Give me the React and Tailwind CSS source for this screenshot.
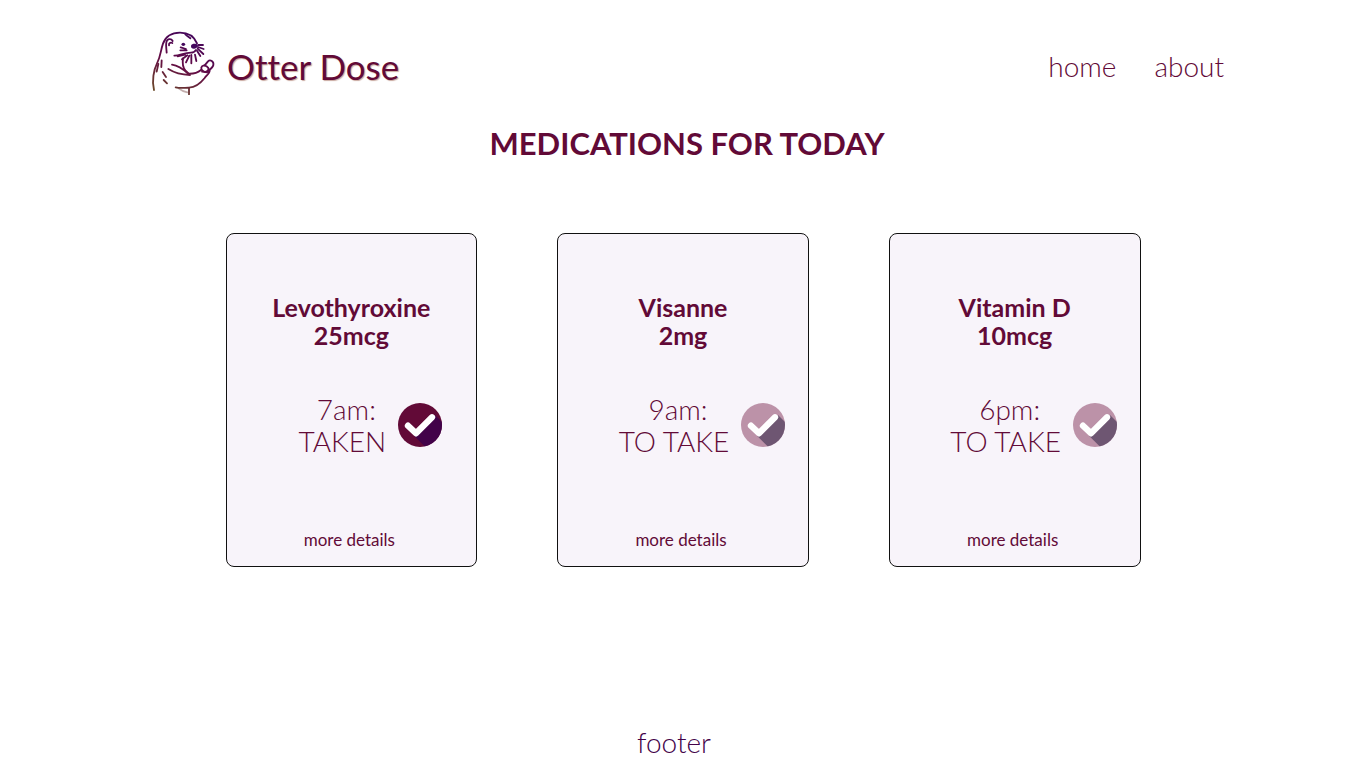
import { useId } from 'react';

const medications = [
  { name: 'Levothyroxine', dose: '25mcg', time: '7am:', taken: true },
  { name: 'Visanne', dose: '2mg', time: '9am:', taken: false },
  { name: 'Vitamin D', dose: '10mcg', time: '6pm:', taken: false },
];

function OtterLogo() {
  return (
    <svg className="h-16 w-16 shrink-0" viewBox="34 33 192 192" fill="none" aria-hidden="true">
      <defs>
        <linearGradient id="otter" gradientUnits="userSpaceOnUse" x1="150" y1="35" x2="70" y2="225">
          <stop offset="0" stopColor="#43075c" />
          <stop offset="0.5" stopColor="#640b45" />
          <stop offset="1" stopColor="#6b4a28" />
        </linearGradient>
      </defs>
      <g stroke="url(#otter)" strokeWidth="5.5" strokeLinecap="round" strokeLinejoin="round">
        <path d="M43 210C36 183 42 150 53 128C63 108 63 91 70 71C78 49 98 38 121 38C148 38 164 51 172 70" />
        <path d="M137 43L144 49L152 55" />
        <path d="M99 63C94 54 82 56 80 67C78 76 80 83 81 98M98 69C92 66 87 70 88 76" />
        <path d="M123 82L139 87M122 91L141 91" />
        <path d="M176 75L190 75M175 81L192 87M174 86L191 102M172 92L182 108" />
        <path d="M104 107C118 108 133 98 154 98C160 98 165 96 169 90" />
        <path d="M114 109L136 104M127 118L143 106M139 127L149 107M155 130L155 105M170 123L166 104" />
        <path d="M130 115C128 129 130 143 137 151L147 161" />
        <path d="M97 134C112 136 129 146 145 161C161 162 173 159 184 150" />
        <path d="M86 147C102 157 121 164 151 165" />
        <path d="M189 152C182 147 184 137 193 136C205 138 211 147 203 153C199 156 193 156 189 152Z" />
        <path d="M195 136L205 124C212 117 223 125 221 135C220 142 214 146 207 151" />
        <path d="M187 155L202 157L210 151C211 159 201 166 195 174C184 188 166 202 148 203C132 204 119 205 108 202" />
        <path d="M148 204L148 223" />
        <path d="M118 206C126 213 134 215 143 217" strokeOpacity="0.4" />
        <path d="M66 121L65 141M56 132L51 155M69 156L79 171M72 180L82 190" />
      </g>
      <ellipse cx="131" cy="73" rx="5.5" ry="5" fill="#43075c" />
      <path d="M154 77C156 70 169 70 174 74C177 79 170 85 164 86C158 87 153 83 154 77Z" fill="#43075c" />
    </svg>
  );
}

function CheckBadge({ taken }) {
  const clip = useId();
  return (
    <svg
      className="size-11 shrink-0"
      viewBox="0 0 132 132"
      role="img"
      aria-label={taken ? 'Taken' : 'Not taken yet'}
    >
      <clipPath id={clip}>
        <circle cx="66" cy="66" r="66" />
      </clipPath>
      <g clipPath={`url(#${clip})`}>
        <rect width="132" height="132" fill={taken ? '#620a37' : '#bc92a8'} />
        <path d="M48 98L111 36L144 69V144H94Z" fill={taken ? '#420249' : '#6e5672'} />
      </g>
      <path
        d="M30 68L54 91L102 43"
        fill="none"
        stroke="#fff"
        strokeWidth="19"
        strokeLinecap="round"
        strokeLinejoin="round"
      />
    </svg>
  );
}

function MedicationCard({ name, dose, time, taken }) {
  return (
    <article className="flex min-h-[334px] flex-col items-center rounded-lg border border-[#111] bg-[#f8f4fa] pt-[59px] pb-3.5 text-center">
      <h2 className="text-[25px] leading-7 font-bold">
        {name}
        <br />
        {dose}
      </h2>
      <div className="mt-11 flex items-center gap-3 pl-[38px]">
        <p className="text-[28px] leading-8 font-light">
          <span className="pl-2">{time}</span>
          <br />
          {taken ? 'TAKEN' : 'TO TAKE'}
        </p>
        <CheckBadge taken={taken} />
      </div>
      <button type="button" className="mt-auto cursor-pointer pr-1 text-[17px] leading-6">
        more details
      </button>
    </article>
  );
}

export default function App() {
  return (
    <div className="flex min-h-screen flex-col bg-white font-['Lato',sans-serif] text-[#620a37] [font-variant-ligatures:none]">
      <header className="flex items-center justify-between pt-[31px] pr-[142px] pl-[151px]">
        <a href="#" className="flex items-center gap-3">
          <OtterLogo />
          <span className="pt-1.5 text-[35px] leading-10 [text-shadow:1px_1px_1px_#c9a9a0]">Otter Dose</span>
        </a>
        <nav className="flex gap-[38px] pt-1.5 text-[28px] leading-8 font-light">
          <a href="#home">home</a>
          <a href="#about">about</a>
        </nav>
      </header>
      <main className="px-8">
        <h1 className="mt-7 pl-2 text-center text-[31px] leading-10 font-bold">MEDICATIONS FOR TODAY</h1>
        <section className="mx-auto mt-[70px] grid max-w-[915px] grid-cols-3 gap-20">
          {medications.map((medication) => (
            <MedicationCard key={medication.name} {...medication} />
          ))}
        </section>
      </main>
      <footer className="mt-auto pr-[18px] pb-2.5 text-center text-[28px] leading-8 font-light text-[#420249]">footer</footer>
    </div>
  );
}
